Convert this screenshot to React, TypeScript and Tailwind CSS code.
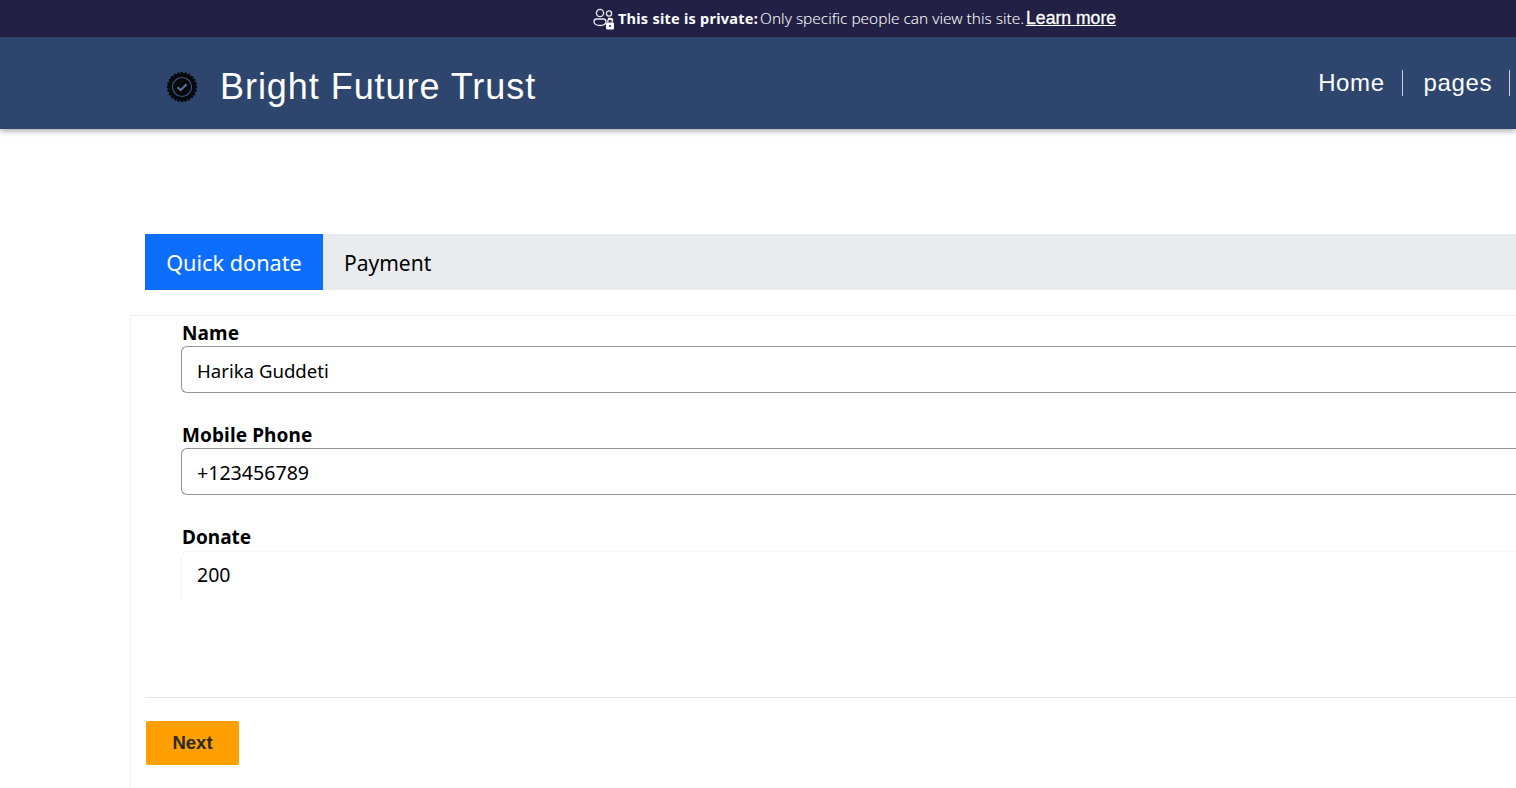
const PrivateIcon = () => (
  <svg width="24" height="24" viewBox="0 0 24 24" fill="none" stroke="#e8e8ee" strokeWidth="1.3" className="shrink-0">
    <circle cx="8" cy="6" r="3.6" />
    <circle cx="17" cy="6.5" r="2.6" />
    <path d="M2 14.5c0-1.6 1.4-2.5 3-2.5h6c1.6 0 3 .9 3 2.5 0 2.5-2.6 4-6 4s-6-1.5-6-4z" />
    <path d="M16 11.5h2.5c1.2 0 2.2.6 2.5 1.6" />
    <path d="M15.8 15.5v-1.2a2.2 2.2 0 0 1 4.4 0v1.2" strokeWidth="1.2" stroke="#ffffff" />
    <rect x="14" y="15.5" width="8" height="7" rx="1" fill="#ffffff" stroke="none" />
    <circle cx="18" cy="19" r="1" fill="#222145" stroke="none" />
  </svg>
);

const BadgeLogo = () => (
  <svg width="32" height="32" viewBox="0 0 32 32" className="shrink-0">
    <circle cx="16" cy="16" r="13.6" fill="#07090f" />
    {Array.from({ length: 24 }).map((_, i) => {
      const a = (i * Math.PI * 2) / 24;
      return <circle key={i} cx={16 + Math.cos(a) * 13.8} cy={16 + Math.sin(a) * 13.8} r="1.5" fill="#07090f" />;
    })}
    <circle cx="16" cy="16" r="9.5" fill="none" stroke="#3a5378" strokeWidth="1.2" />
    <path d="M11.5 16.2l3.2 3 5.8-6" fill="none" stroke="#5a76a0" strokeWidth="2" />
  </svg>
);

const fields = [
  { label: "Name", value: "Harika Guddeti", size: "text-[18.6px]" },
  { label: "Mobile Phone", value: "+123456789", size: "text-[19.6px]" },
];

const App = () => {
  return (
    <div className="h-[788px] w-[1516px] overflow-hidden bg-white font-['Noto_Sans',sans-serif] text-black">
      <div className="flex h-[37px] items-center justify-center gap-[2px] bg-[#222145] pl-[192px] text-white">
        <PrivateIcon />
        <span className="text-[14.5px] font-bold tracking-[0.25px]">This site is private:</span>
        <span className="text-[15.4px] font-light">Only specific people can view this site.</span>
        <a className="font-['Liberation_Sans',sans-serif] text-[17.6px] underline [-webkit-text-stroke:0.3px_white]">Learn more</a>
      </div>

      <header className="relative flex h-[92px] items-center justify-between bg-[#2e466d] pl-[166px] pt-[8px] font-['Liberation_Sans',sans-serif] text-white shadow-[0_2px_6px_rgba(0,0,0,0.35)]">
        <div className="flex items-center gap-[22px]">
          <BadgeLogo />
          <span className="text-[36px] leading-none tracking-[0.95px]">Bright Future Trust</span>
        </div>
        <nav className="mb-[8px] flex items-center text-[24px] tracking-[0.6px]">
          <a className="border-r border-[#c8ced8] pr-[17px] leading-[26px]">Home</a>
          <a className="border-r border-[#c8ced8] pl-[21px] pr-[17px] leading-[26px]">pages</a>
          <span className="w-[6px]" />
        </nav>
      </header>

      <main className="pl-[130px] pt-[105px]">
        <div className="ml-[15px] flex h-[56px] items-stretch bg-[#e9ecef]">
          <button className="w-[178px] bg-[#0d6efd] pt-[2px] text-[21.7px] text-white">Quick donate</button>
          <button className="px-[21px] pt-[4px] text-[21px]">Payment</button>
        </div>

        <section className="mt-[25px] border-l border-t border-[#f0f0f0] pb-[23px] pl-[15px]">
          <div className="pl-[35px]">
            {fields.map((f) => (
              <div key={f.label} className="mb-[25px]">
                <label className="block h-[30px] pl-[1px] pt-[5px] text-[19px] font-bold leading-[24px] tracking-[0.1px]">{f.label}</label>
                <div className={`flex h-[47px] items-center rounded-l-[6px] border border-r-0 border-[#949494] pl-[15px] pt-[2px] ${f.size}`}>
                  {f.value}
                </div>
              </div>
            ))}
            <label className="block h-[31px] pl-[1px] pt-[5px] text-[19px] font-bold leading-[24px]">Donate</label>
            <div className="flex h-[47px] items-center rounded-tl-[6px] border-l border-t border-[#f3f3f3] pl-[15px] text-[19.5px]">
              200
            </div>
          </div>

          <div className="mt-[99px] border-t border-[#e5e5e5] pt-[23px]">
            <button className="h-[44px] w-[93px] rounded-[2px] bg-[#ff9f00] font-['Liberation_Sans',sans-serif] text-[18.5px] font-bold text-[#2b2b2b]">
              Next
            </button>
          </div>
        </section>
      </main>
    </div>
  );
};

export default App;
